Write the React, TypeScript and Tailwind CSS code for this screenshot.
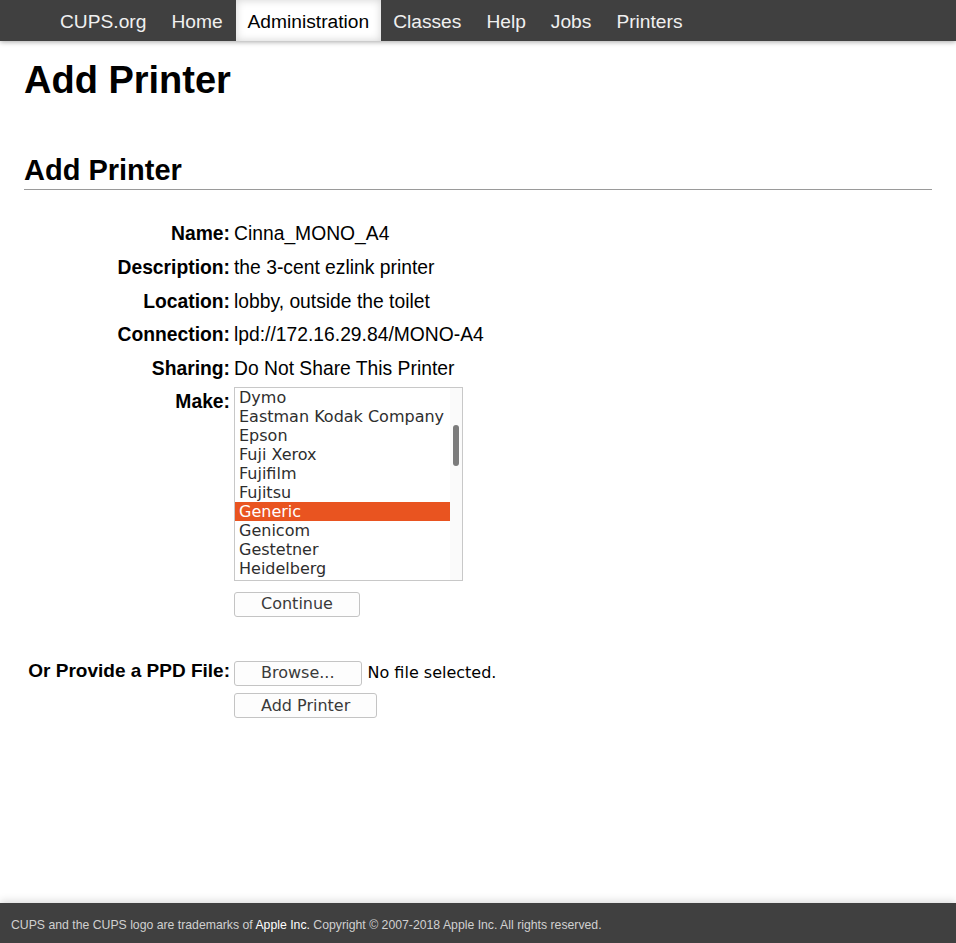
import React from 'react';

const navItems = ['CUPS.org', 'Home', 'Administration', 'Classes', 'Help', 'Jobs', 'Printers'];

const makes = [
  'Dymo',
  'Eastman Kodak Company',
  'Epson',
  'Fuji Xerox',
  'Fujifilm',
  'Fujitsu',
  'Generic',
  'Genicom',
  'Gestetner',
  'Heidelberg',
];

const rows = [
  ['Name:', 'Cinna_MONO_A4'],
  ['Description:', 'the 3-cent ezlink printer'],
  ['Location:', 'lobby, outside the toilet'],
  ['Connection:', 'lpd://172.16.29.84/MONO-A4'],
  ['Sharing:', 'Do Not Share This Printer'],
];

const Button = ({ label }: { label: string }) => {
  return (
    <button className="h-[25px] px-[26px] border border-[#c4c4c4] rounded-[3px] bg-[#fdfdfd] text-[#3a3a3a] text-[16px] leading-none font-['DejaVu_Sans',sans-serif]">
      {label}
    </button>
  );
};

const App = () => {
  return (
    <div className="h-[943px] flex flex-col bg-white font-['Liberation_Sans',Arial,sans-serif] text-black">
      {/* top nav */}
      <div className="h-[41px] bg-[#404040] flex pl-[48px] shadow-[0_1px_5px_rgba(0,0,0,0.35)] relative z-10">
        {navItems.map((item) =>
          item === 'Administration' ? (
            <div
              key={item}
              className="h-full px-3 pt-[4px] flex items-center bg-white text-black text-[19.2px] shadow-[inset_0_0_8px_rgba(0,0,0,0.18)]"
            >
              {item}
            </div>
          ) : (
            <div key={item} className="h-full px-3 pt-[4px] mr-px flex items-center text-[#f0f0f0] text-[19.2px]">
              {item}
            </div>
          )
        )}
      </div>

      <div className="px-[24px]">
        <h1 className="mt-[17px] text-[38px] font-bold leading-[1.2]">Add Printer</h1>
        <h2 className="mt-[49px] text-[29px] font-bold leading-[1.2]">Add Printer</h2>
        <div className="mt-[2px] h-px bg-[#9a9a9a]" />

        <div className="mt-[32px] grid grid-cols-[206px_1fr] gap-x-1 gap-y-[9.6px] text-[19.3px] leading-[24px]">
          {rows.map(([label, value]) => (
            <React.Fragment key={label}>
              <div className="text-right font-bold">{label}</div>
              <div>{value}</div>
            </React.Fragment>
          ))}
          <div className="text-right font-bold">Make:</div>
          <div className="-mt-[3px] flex flex-col items-start">
            <div className="w-[229px] h-[194px] border border-[#c8c8c8] flex overflow-hidden font-['DejaVu_Sans',sans-serif] text-[16px] text-[#2e2e2e]">
              <div className="flex-1">
                {makes.map((m) => (
                  <div
                    key={m}
                    className={
                      m === 'Generic'
                        ? 'h-[19px] leading-[19px] pl-[4px] bg-[#e95420] text-white'
                        : 'h-[19px] leading-[19px] pl-[4px]'
                    }
                  >
                    {m}
                  </div>
                ))}
              </div>
              <div className="w-[12px] bg-[#fafafa] flex justify-center">
                <div className="mt-[37px] w-[6px] h-[41px] rounded-full bg-[#7b7b7b]" />
              </div>
            </div>
            <div className="mt-[10px]">
              <Button label="Continue" />
            </div>
          </div>
        </div>

        <div className="mt-[42px] grid grid-cols-[206px_1fr] gap-x-1 text-[19.3px] leading-[24px]">
          <div className="text-right font-bold text-[19px]">Or Provide a PPD File:</div>
          <div className="flex flex-col items-start">
            <div className="mt-[2px] flex items-center gap-[6px]">
              <Button label="Browse..." />
              <span className="text-[16px] font-['DejaVu_Sans',sans-serif]">No file selected.</span>
            </div>
            <div className="mt-[7px]">
              <Button label="Add Printer" />
            </div>
          </div>
        </div>
      </div>

      {/* footer */}
      <div className="mt-auto h-[40px] bg-[#404040] flex items-center pt-1 px-[11px] text-[12.25px] text-[#d0d0d0] shadow-[0_-2px_8px_rgba(0,0,0,0.15)]">
        <span>
          CUPS and the CUPS logo are trademarks of <span className="text-white">Apple Inc.</span> Copyright © 2007-2018
          Apple Inc. All rights reserved.
        </span>
      </div>
    </div>
  );
};

export default App;
